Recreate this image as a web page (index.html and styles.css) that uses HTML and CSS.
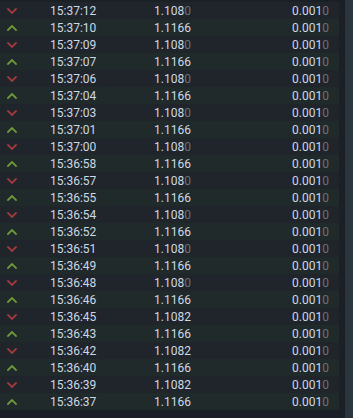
FILE: index.html
```html
<!DOCTYPE html>
<html>
<head>
<meta charset="utf-8">
<link rel="stylesheet" href="styles.css">
</head>
<body>
<div class="panel">
  <div class="list" id="list">
    <div class="row down"><span class="dir"><svg viewBox="0 0 10 6"><path d="M1 1 L5 5 L9 1"/></svg></span><span class="time">15:37:12</span><span class="price">1.108<i>0</i></span><span class="size">0.001<i>0</i></span></div>
    <div class="row up"><span class="dir"><svg viewBox="0 0 10 6"><path d="M1 5 L5 1 L9 5"/></svg></span><span class="time">15:37:10</span><span class="price">1.1166</span><span class="size">0.001<i>0</i></span></div>
    <div class="row down"><span class="dir"><svg viewBox="0 0 10 6"><path d="M1 1 L5 5 L9 1"/></svg></span><span class="time">15:37:09</span><span class="price">1.108<i>0</i></span><span class="size">0.001<i>0</i></span></div>
    <div class="row up"><span class="dir"><svg viewBox="0 0 10 6"><path d="M1 5 L5 1 L9 5"/></svg></span><span class="time">15:37:07</span><span class="price">1.1166</span><span class="size">0.001<i>0</i></span></div>
    <div class="row down"><span class="dir"><svg viewBox="0 0 10 6"><path d="M1 1 L5 5 L9 1"/></svg></span><span class="time">15:37:06</span><span class="price">1.108<i>0</i></span><span class="size">0.001<i>0</i></span></div>
    <div class="row up"><span class="dir"><svg viewBox="0 0 10 6"><path d="M1 5 L5 1 L9 5"/></svg></span><span class="time">15:37:04</span><span class="price">1.1166</span><span class="size">0.001<i>0</i></span></div>
    <div class="row down"><span class="dir"><svg viewBox="0 0 10 6"><path d="M1 1 L5 5 L9 1"/></svg></span><span class="time">15:37:03</span><span class="price">1.108<i>0</i></span><span class="size">0.001<i>0</i></span></div>
    <div class="row up"><span class="dir"><svg viewBox="0 0 10 6"><path d="M1 5 L5 1 L9 5"/></svg></span><span class="time">15:37:01</span><span class="price">1.1166</span><span class="size">0.001<i>0</i></span></div>
    <div class="row down"><span class="dir"><svg viewBox="0 0 10 6"><path d="M1 1 L5 5 L9 1"/></svg></span><span class="time">15:37:00</span><span class="price">1.108<i>0</i></span><span class="size">0.001<i>0</i></span></div>
    <div class="row up"><span class="dir"><svg viewBox="0 0 10 6"><path d="M1 5 L5 1 L9 5"/></svg></span><span class="time">15:36:58</span><span class="price">1.1166</span><span class="size">0.001<i>0</i></span></div>
    <div class="row down"><span class="dir"><svg viewBox="0 0 10 6"><path d="M1 1 L5 5 L9 1"/></svg></span><span class="time">15:36:57</span><span class="price">1.108<i>0</i></span><span class="size">0.001<i>0</i></span></div>
    <div class="row up"><span class="dir"><svg viewBox="0 0 10 6"><path d="M1 5 L5 1 L9 5"/></svg></span><span class="time">15:36:55</span><span class="price">1.1166</span><span class="size">0.001<i>0</i></span></div>
    <div class="row down"><span class="dir"><svg viewBox="0 0 10 6"><path d="M1 1 L5 5 L9 1"/></svg></span><span class="time">15:36:54</span><span class="price">1.108<i>0</i></span><span class="size">0.001<i>0</i></span></div>
    <div class="row up"><span class="dir"><svg viewBox="0 0 10 6"><path d="M1 5 L5 1 L9 5"/></svg></span><span class="time">15:36:52</span><span class="price">1.1166</span><span class="size">0.001<i>0</i></span></div>
    <div class="row down"><span class="dir"><svg viewBox="0 0 10 6"><path d="M1 1 L5 5 L9 1"/></svg></span><span class="time">15:36:51</span><span class="price">1.108<i>0</i></span><span class="size">0.001<i>0</i></span></div>
    <div class="row up"><span class="dir"><svg viewBox="0 0 10 6"><path d="M1 5 L5 1 L9 5"/></svg></span><span class="time">15:36:49</span><span class="price">1.1166</span><span class="size">0.001<i>0</i></span></div>
    <div class="row down"><span class="dir"><svg viewBox="0 0 10 6"><path d="M1 1 L5 5 L9 1"/></svg></span><span class="time">15:36:48</span><span class="price">1.108<i>0</i></span><span class="size">0.001<i>0</i></span></div>
    <div class="row up"><span class="dir"><svg viewBox="0 0 10 6"><path d="M1 5 L5 1 L9 5"/></svg></span><span class="time">15:36:46</span><span class="price">1.1166</span><span class="size">0.001<i>0</i></span></div>
    <div class="row down"><span class="dir"><svg viewBox="0 0 10 6"><path d="M1 1 L5 5 L9 1"/></svg></span><span class="time">15:36:45</span><span class="price">1.1082</span><span class="size">0.001<i>0</i></span></div>
    <div class="row up"><span class="dir"><svg viewBox="0 0 10 6"><path d="M1 5 L5 1 L9 5"/></svg></span><span class="time">15:36:43</span><span class="price">1.1166</span><span class="size">0.001<i>0</i></span></div>
    <div class="row down"><span class="dir"><svg viewBox="0 0 10 6"><path d="M1 1 L5 5 L9 1"/></svg></span><span class="time">15:36:42</span><span class="price">1.1082</span><span class="size">0.001<i>0</i></span></div>
    <div class="row up"><span class="dir"><svg viewBox="0 0 10 6"><path d="M1 5 L5 1 L9 5"/></svg></span><span class="time">15:36:40</span><span class="price">1.1166</span><span class="size">0.001<i>0</i></span></div>
    <div class="row down"><span class="dir"><svg viewBox="0 0 10 6"><path d="M1 1 L5 5 L9 1"/></svg></span><span class="time">15:36:39</span><span class="price">1.1082</span><span class="size">0.001<i>0</i></span></div>
    <div class="row up"><span class="dir"><svg viewBox="0 0 10 6"><path d="M1 5 L5 1 L9 5"/></svg></span><span class="time">15:36:37</span><span class="price">1.1166</span><span class="size">0.001<i>0</i></span></div>
  </div>
  <div class="scrollbar"></div>
</div>
</body>
</html>
```
FILE: styles.css
```css
html, body {
  margin: 0;
  padding: 0;
  background: #1b2026;
}
.panel {
  width: 353px;
  height: 418px;
  display: flex;
  overflow: hidden;
  background: #1b2026;
}
.list {
  width: 339px;
  padding-top: 2px;
  display: flex;
  flex-direction: column;
}
.row {
  height: 17px;
  display: flex;
  align-items: center;
  font-family: Roboto, "Liberation Sans", sans-serif;
  font-size: 12px;
  color: #cdd8e6;
  background: #1f252b;
}
.row.up {
  background: #212a2a;
}
.dir {
  width: 50px;
  display: flex;
  padding-left: 7px;
  box-sizing: border-box;
}
.dir svg {
  width: 10px;
  height: 6px;
  fill: none;
  stroke-width: 1.8;
  stroke-linecap: square;
}
.down .dir svg { stroke: #a23a3c; }
.up .dir svg { stroke: #6e9a3c; }
.time {
  width: 104px;
}
.price {
  flex: 1;
}
.size {
  padding-right: 10px;
  text-align: right;
}
.row i {
  font-style: normal;
  color: #6c7177;
}
.scrollbar {
  margin-left: 6px;
  flex: 1;
  background: #2b353e;
}
```
